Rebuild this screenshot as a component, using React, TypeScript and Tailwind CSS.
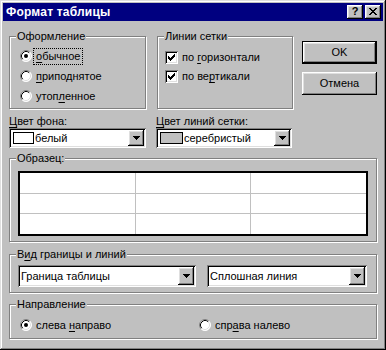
import React from "react";

const raised =
  "shadow-[inset_-1px_-1px_0_#000,inset_1px_1px_0_#fff,inset_-2px_-2px_0_#808080,inset_2px_2px_0_#dfdfdf]";
const sunken =
  "shadow-[inset_1px_1px_0_#808080,inset_-1px_-1px_0_#fff,inset_2px_2px_0_#000,inset_-2px_-2px_0_#dfdfdf]";

function U({ children }: { children: React.ReactNode }) {
  return <span className="underline underline-offset-[2px] decoration-1">{children}</span>;
}

function Group({
  label,
  className,
  children,
}: {
  label: React.ReactNode;
  className: string;
  children?: React.ReactNode;
}) {
  return (
    <div
      className={
        "relative border border-[#808080] shadow-[inset_1px_1px_0_#fff,1px_1px_0_#fff] " + className
      }
    >
      <div className="absolute left-[6px] top-[-8px] bg-[#c0c0c0] px-[1px] leading-[14px] whitespace-nowrap">
        {label}
      </div>
      {children}
    </div>
  );
}

function Radio({ checked }: { checked?: boolean }) {
  return (
    <svg width="12" height="12" viewBox="0 0 12 12" className="shrink-0">
      <circle cx="6" cy="6" r="5.5" fill="#fff" />
      <path d="M2.11 9.89 A5.5 5.5 0 0 1 9.89 2.11" stroke="#808080" fill="none" />
      <path d="M9.89 2.11 A5.5 5.5 0 0 1 2.11 9.89" stroke="#fff" fill="none" />
      <path d="M2.82 9.18 A4.5 4.5 0 0 1 9.18 2.82" stroke="#000" fill="none" />
      <path d="M9.18 2.82 A4.5 4.5 0 0 1 2.82 9.18" stroke="#dfdfdf" fill="none" />
      {checked && <circle cx="6" cy="6" r="2" fill="#000" />}
    </svg>
  );
}

function Check() {
  const cols = [2, 3, 4, 3, 2, 1, 0];
  return (
    <div className={`w-[13px] h-[13px] bg-white shrink-0 ${sunken}`}>
      <svg width="13" height="13" viewBox="0 0 13 13" shapeRendering="crispEdges">
        {cols.map((r, i) => (
          <rect key={i} x={3 + i} y={3 + r} width="1" height="3" fill="#000" />
        ))}
      </svg>
    </div>
  );
}

function Arrow() {
  return (
    <svg width="7" height="4" viewBox="0 0 7 4" shapeRendering="crispEdges">
      <rect x="0" y="0" width="7" height="1" fill="#000" />
      <rect x="1" y="1" width="5" height="1" fill="#000" />
      <rect x="2" y="2" width="3" height="1" fill="#000" />
      <rect x="3" y="3" width="1" height="1" fill="#000" />
    </svg>
  );
}

function Combo({ children, className }: { children: React.ReactNode; className: string }) {
  return (
    <div className={`flex bg-white p-[2px] ${sunken} ${className}`}>
      <div className="flex-1 flex items-center min-w-0 whitespace-nowrap">{children}</div>
      <div className={`w-[16px] bg-[#c0c0c0] flex items-center justify-center ${raised}`}>
        <Arrow />
      </div>
    </div>
  );
}

export default function App() {
  return (
    <div className="w-[386px] h-[350px] bg-[#c0c0c0] p-[3px] flex flex-col text-[11px] leading-[13px] text-black font-['Liberation_Sans',Arial,sans-serif] shadow-[inset_-1px_-1px_0_#000,inset_1px_1px_0_#dfdfdf,inset_-2px_-2px_0_#808080,inset_2px_2px_0_#fff]">
      {/* Title bar */}
      <div className="h-[18px] bg-[#000080] flex items-center pl-[3px] pr-[2px]">
        <div className="flex-1 text-white font-bold text-[12px] tracking-[0.2px]">Формат таблицы</div>
        <div className={`w-[16px] h-[14px] bg-[#c0c0c0] flex items-center justify-center ${raised}`}>
          <span className="font-bold text-[11px] leading-[11px] mt-[-1px]">?</span>
        </div>
        <div className={`w-[16px] h-[14px] ml-[2px] bg-[#c0c0c0] flex items-center justify-center ${raised}`}>
          <svg width="8" height="7" viewBox="0 0 8 7" shapeRendering="crispEdges" className="mt-[-1px]">
            {[0, 1, 2, 3, 4, 5, 6].map((i) => (
              <React.Fragment key={i}>
                <rect x={i} y={i} width="2" height="1" fill="#000" />
                <rect x={6 - i} y={i} width="2" height="1" fill="#000" />
              </React.Fragment>
            ))}
          </svg>
        </div>
      </div>

      {/* Body */}
      <div className="flex flex-col px-[6px]">
        {/* Row 1 */}
        <div className="flex mt-[15px] h-[73px]">
          <Group label="Оформление" className="w-[137px] h-[73px] pt-[9px] pl-[10px]">
            <div className="h-[20px] flex items-center">
              <Radio checked />
              <span className="ml-[2px] px-[2px] py-[1px] outline-1 outline-dotted outline-black">
                <U>о</U>бычное
              </span>
            </div>
            <div className="h-[20px] flex items-center">
              <Radio />
              <span className="ml-[4px]">
                <U>п</U>риподнятое
              </span>
            </div>
            <div className="h-[20px] flex items-center">
              <Radio />
              <span className="ml-[4px]">
                утоп<U>л</U>енное
              </span>
            </div>
          </Group>
          <Group label="Линии сетки" className="w-[136px] h-[73px] ml-[11px] pt-[11px] pl-[7px]">
            <div className="h-[19px] flex items-center">
              <Check />
              <span className="ml-[4px]">
                по <U>г</U>оризонтали
              </span>
            </div>
            <div className="h-[19px] flex items-center">
              <Check />
              <span className="ml-[4px]">
                по ве<U>р</U>тикали
              </span>
            </div>
          </Group>
          <div className="ml-[9px] w-[75px] flex flex-col">
            <div className="mt-[5px] h-[23px] border border-black">
              <div className={`h-full flex items-center justify-center ${raised}`}>OK</div>
            </div>
            <div className={`mt-[8px] h-[23px] flex items-center justify-center ${raised}`}>Отмена</div>
          </div>
        </div>

        {/* Row 2 */}
        <div className="flex mt-[5px]">
          <div className="w-[137px] flex flex-col">
            <div className="h-[14px] leading-[14px]">
              <U>Ц</U>вет фона:
            </div>
            <Combo className="h-[20px]">
              <div className="ml-[2px] w-[21px] h-[12px] border border-black bg-white" />
              <span className="ml-[1px]">белый</span>
            </Combo>
          </div>
          <div className="w-[136px] ml-[10px] flex flex-col">
            <div className="h-[14px] leading-[14px]">
              <U>Ц</U>вет линий сетки:
            </div>
            <Combo className="h-[20px]">
              <div className="ml-[2px] w-[23px] h-[12px] border border-black bg-[#c0c0c0]" />
              <span className="ml-[1px]">серебристый</span>
            </Combo>
          </div>
        </div>

        {/* Row 3 */}
        <Group label="Образец:" className="mt-[10px] w-[368px] h-[84px] pl-[8px] pt-[12px]">
          <div className="w-[350px] h-[65px] border-2 border-black bg-[#c0c0c0] grid grid-cols-3 grid-rows-3 gap-[1px]">
            {Array.from({ length: 9 }).map((_, i) => (
              <div key={i} className="bg-white" />
            ))}
          </div>
        </Group>

        {/* Row 4 */}
        <Group
          label={
            <>
              В<U>и</U>д границы и линий
            </>
          }
          className="mt-[12px] w-[368px] h-[39px] pl-[8px] pt-[10px] flex"
        >
          <Combo className="w-[178px] h-[22px]">
            <span className="ml-[1px]">Граница таблицы</span>
          </Combo>
          <Combo className="w-[160px] h-[22px] ml-[11px]">
            <span className="ml-[1px]">Сплошная линия</span>
          </Combo>
        </Group>

        {/* Row 5 */}
        <Group label="Направление" className="mt-[11px] w-[368px] h-[35px] pl-[10px] pt-[10px] flex">
          <div className="h-[20px] flex items-center w-[179px]">
            <Radio checked />
            <span className="ml-[4px]">
              слева <U>н</U>аправо
            </span>
          </div>
          <div className="h-[20px] flex items-center">
            <Radio />
            <span className="ml-[4px]">
              спр<U>а</U>ва налево
            </span>
          </div>
        </Group>
      </div>
    </div>
  );
}
